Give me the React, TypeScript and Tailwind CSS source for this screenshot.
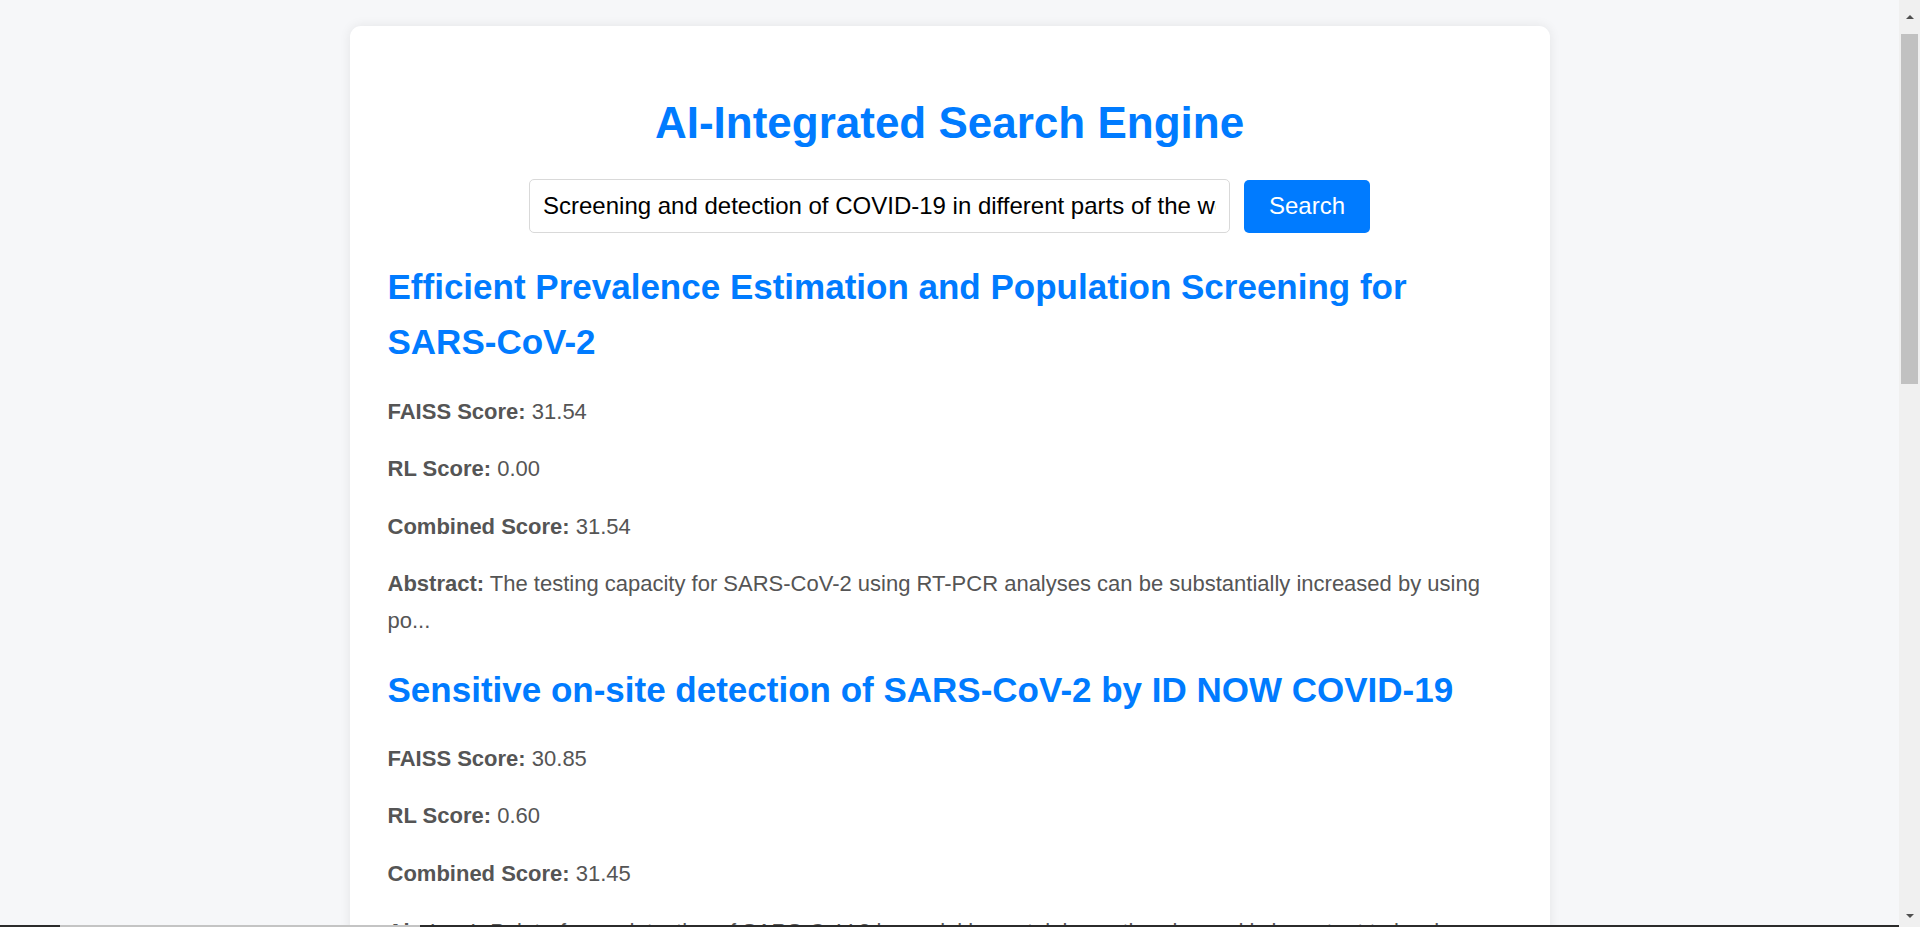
import React from "react";

type Result = {
  title: string;
  faiss: string;
  rl: string;
  combined: string;
  abstract: string;
};

const results: Result[] = [
  {
    title: "Efficient Prevalence Estimation and Population Screening for SARS-CoV-2",
    faiss: "31.54",
    rl: "0.00",
    combined: "31.54",
    abstract:
      "The testing capacity for SARS-CoV-2 using RT-PCR analyses can be substantially increased by using po...",
  },
  {
    title: "Sensitive on-site detection of SARS-CoV-2 by ID NOW COVID-19",
    faiss: "30.85",
    rl: "0.60",
    combined: "31.45",
    abstract:
      "Point-of-care detection of SARS-CoV-2 is crucial in containing outbreaks, and is important to local...",
  },
];

function Field({ label, value }: { label: string; value: string }) {
  return (
    <p className="text-[22px] leading-[36.6px] text-[#555]">
      <strong className="font-bold">{label}:</strong> {value}
    </p>
  );
}

function ResultItem({ r }: { r: Result }) {
  return (
    <div className="flex flex-col">
      <h2 className="text-[35px] leading-[55px] font-bold text-[#007bff]">{r.title}</h2>
      <div className="mt-[24.3px] flex flex-col gap-[21px]">
        <Field label="FAISS Score" value={r.faiss} />
        <Field label="RL Score" value={r.rl} />
        <Field label="Combined Score" value={r.combined} />
        <Field label="Abstract" value={r.abstract} />
      </div>
    </div>
  );
}

export default function App() {
  return (
    <div className="h-screen w-full flex overflow-hidden bg-[#f6f7f9] font-['Liberation_Sans',Arial,sans-serif]">
      <div className="relative flex-1 min-w-0 overflow-hidden">
        <div className="mx-auto mt-[26px] w-[1200px] rounded-[11px] bg-white shadow-[0_0_12px_rgba(0,0,0,0.08)] px-[38px] pt-[60px] pb-[40px]">
          <h1 className="text-center text-[44px] leading-[73px] font-bold text-[#007bff]">
            AI-Integrated Search Engine
          </h1>
          <div className="mt-[20px] flex items-center justify-center gap-[14px]">
            <input
              readOnly
              value="Screening and detection of COVID-19 in different parts of the world"
              className="h-[54px] w-[701px] rounded-[5px] border border-[#d9d9d9] bg-white px-[13px] text-[24px] text-black outline-none font-['Liberation_Sans',Arial,sans-serif]"
            />
            <button className="h-[53px] w-[126px] rounded-[5px] bg-[#007bff] text-[24px] text-white font-['Liberation_Sans',Arial,sans-serif]">
              Search
            </button>
          </div>
          <div className="mt-[26.3px] flex flex-col gap-[22px]">
            {results.map((r) => (
              <ResultItem key={r.title} r={r} />
            ))}
          </div>
        </div>
        <div className="absolute bottom-0 left-0 right-0 flex h-[2px]">
          <div className="w-[60px] bg-[#2b2b2b]" />
          <div className="w-[360px] bg-[#c4c4c4]" />
          <div className="flex-1 bg-[#2b2b2b]" />
        </div>
      </div>
      <div className="flex w-[21px] shrink-0 flex-col items-center bg-[#f0f0f0]">
        <div className="flex h-[34px] w-full items-center justify-center">
          <div className="h-0 w-0 border-x-[4px] border-b-[4px] border-x-transparent border-b-[#505050]" />
        </div>
        <div className="h-[350px] w-[17px] bg-[#c1c1c1]" />
        <div className="flex-1" />
        <div className="flex h-[22px] w-full items-center justify-center">
          <div className="h-0 w-0 border-x-[4px] border-t-[4px] border-x-transparent border-t-[#505050]" />
        </div>
      </div>
    </div>
  );
}
